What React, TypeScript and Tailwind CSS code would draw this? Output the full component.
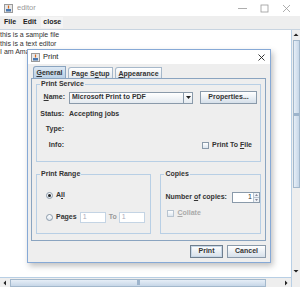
import React from "react";

const font = "font-['Liberation_Sans',Arial,sans-serif]";

function JavaIcon() {
  return (
    <svg width="9" height="9" viewBox="0 0 9 9">
      <rect x="0.5" y="0.5" width="8" height="8" fill="#e8e8e8" stroke="#9a9a9a" />
      <path d="M4.5 1.5 L4.5 4.5" stroke="#d2691e" strokeWidth="1.2" />
      <rect x="2" y="5" width="5" height="2.5" fill="#4a78b0" />
    </svg>
  );
}

function ArrowBox({ dir }: { dir: "up" | "down" | "left" | "right" }) {
  const paths = {
    up: "M1.5 5 L4 2.5 L6.5 5 Z",
    down: "M1.5 3 L4 5.5 L6.5 3 Z",
    left: "M5 1.5 L2.5 4 L5 6.5 Z",
    right: "M3 1.5 L5.5 4 L3 6.5 Z",
  };
  return (
    <div className="flex h-[8px] w-[8px] items-center justify-center bg-[#eeeeee]">
      <svg width="8" height="8" viewBox="0 0 8 8">
        <path d={paths[dir]} fill="#222" />
      </svg>
    </div>
  );
}

function Check({ disabled }: { disabled?: boolean }) {
  return (
    <span
      className={`inline-block h-[7px] w-[7px] border bg-gradient-to-b from-white to-[#dde6ef] ${
        disabled ? "border-[#b8c4d0]" : "border-[#8a9aaa]"
      }`}
    />
  );
}

function Radio({ on }: { on?: boolean }) {
  return (
    <span className="flex h-[7px] w-[7px] items-center justify-center rounded-full border border-[#8a9aaa] bg-gradient-to-b from-white to-[#dde6ef]">
      {on && <span className="h-[3px] w-[3px] rounded-full bg-[#222]" />}
    </span>
  );
}

function Btn({ label, focus, w }: { label: string; focus?: boolean; w: string }) {
  return (
    <div
      className={`flex h-[13px] ${w} items-center justify-center border bg-gradient-to-b from-white to-[#d6e0ea] text-[7px] font-bold text-[#333] ${
        focus ? "border-[#6f7f8f] shadow-[inset_0_0_0_1px_#c8d8e8]" : "border-[#8a9aaa]"
      }`}
    >
      {label}
    </div>
  );
}

function Group({ title, className, children }: { title: string; className: string; children: React.ReactNode }) {
  return (
    <fieldset className={`border border-[#b8cfe5] ${className}`}>
      <legend className="ml-[3px] px-[1px] text-[7px] font-bold leading-[8px] text-[#333]">{title}</legend>
      {children}
    </fieldset>
  );
}

export default function App() {
  return (
    <div className={`relative h-[287px] w-[300px] overflow-hidden bg-white ${font} text-[#333]`}>
      {/* outer window title bar */}
      <div className="flex h-[16px] items-center bg-white pl-[4px]">
        <JavaIcon />
        <span className="ml-[4px] text-[7.5px] text-[#999]">editor</span>
        <div className="ml-auto flex items-center gap-[13px] pr-[9px] text-[#999]">
          <svg width="9" height="9" viewBox="0 0 9 9">
            <path d="M0 4.5 H9" stroke="#999" strokeWidth="0.8" />
          </svg>
          <svg width="9" height="9" viewBox="0 0 9 9">
            <rect x="1" y="1" width="7" height="7" fill="none" stroke="#999" strokeWidth="0.8" />
          </svg>
          <svg width="9" height="9" viewBox="0 0 9 9">
            <path d="M1 1 L8 8 M8 1 L1 8" stroke="#999" strokeWidth="0.8" />
          </svg>
        </div>
      </div>

      {/* menu bar */}
      <div className="flex h-[14px] items-center gap-[7px] border-b border-[#c8d4e0] bg-[#eeeeee] pl-[4px] text-[7px] font-bold text-[#222]">
        <span>File</span>
        <span>Edit</span>
        <span className="-ml-[2px] bg-[#f4f4f4] px-[2px]">close</span>
      </div>

      {/* editor area */}
      <div className="flex h-[257px]">
        <div className="flex flex-1 flex-col">
          <div className="flex-1 bg-white pt-[1px] text-[7px] leading-[8.7px] text-[#333]">
            <div>this is a sample file</div>
            <div>this is a text editor</div>
            <div>I am Ama</div>
          </div>
          {/* horizontal scrollbar */}
          <div className="flex h-[10px] items-center gap-[1px] border-t border-[#b8cfe5] bg-[#eeeeee] px-[1px]">
            <ArrowBox dir="left" />
            <div className="relative flex h-[8px] w-[256px] items-center justify-center border border-[#a3b8cc] bg-gradient-to-b from-[#e6eef7] to-[#c7d7e8]">
              <span className="h-[5px] w-[3px] bg-[#9db4cc]" />
            </div>
            <div className="flex-1" />
            <ArrowBox dir="right" />
          </div>
        </div>
        {/* vertical scrollbar */}
        <div className="flex w-[9px] flex-col items-center gap-[1px] border-l border-[#b8cfe5] bg-[#eeeeee] py-[1px]">
          <ArrowBox dir="up" />
          <div className="flex h-[148px] w-[7px] items-center justify-center border border-[#a3b8cc] bg-gradient-to-r from-[#e6eef7] to-[#c7d7e8]">
            <span className="h-[3px] w-[5px] bg-[#9db4cc]" />
          </div>
          <div className="flex-1" />
          <ArrowBox dir="down" />
          <div className="h-[10px]" />
        </div>
      </div>

      {/* print dialog */}
      <div className="absolute left-[27px] top-[49px] flex h-[214px] w-[244px] flex-col border border-[#86a9d6] bg-[#eeeeee] shadow-[2px_3px_6px_rgba(0,0,0,0.25)]">
        <div className="flex h-[14px] items-center bg-white pl-[3px]">
          <JavaIcon />
          <span className="ml-[3px] text-[7.5px] text-[#222]">Print</span>
          <svg className="ml-auto mr-[5px]" width="7" height="7" viewBox="0 0 7 7">
            <path d="M0.5 0.5 L6.5 6.5 M6.5 0.5 L0.5 6.5" stroke="#222" strokeWidth="0.9" />
          </svg>
        </div>

        <div className="flex flex-1 flex-col px-[3px] pt-[2px]">
          {/* tabs */}
          <div className="flex h-[12px] items-end gap-[2px] pl-[2px] text-[7px] font-bold leading-none">
            <div className="flex h-[12px] w-[33px] items-center justify-center rounded-tl-[3px] border border-b-0 border-[#8aa4c0] bg-gradient-to-b from-[#dde8f3] to-[#b8cfe5]">
              <span className="underline decoration-[0.5px] underline-offset-[1px]">G</span>eneral
            </div>
            <div className="flex h-[11px] w-[45px] items-center justify-center rounded-tl-[3px] border border-b-0 border-[#a6b8ca] bg-gradient-to-b from-white to-[#e2e8ee]">
              Page S<span className="underline decoration-[0.5px] underline-offset-[1px]">e</span>tup
            </div>
            <div className="flex h-[11px] w-[47px] items-center justify-center rounded-tl-[3px] border border-b-0 border-[#a6b8ca] bg-gradient-to-b from-white to-[#e2e8ee]">
              <span className="underline decoration-[0.5px] underline-offset-[1px]">A</span>ppearance
            </div>
          </div>

          {/* tab panel */}
          <div className="flex h-[163px] w-[235px] flex-col border border-[#8aa4c0] px-[4px] pt-[1px]">
            <Group title="Print Service" className="h-[82px] w-[225px]">
              <div className="flex items-center pt-[3px]">
                <span className="w-[28px] text-right text-[7px] font-bold">
                  <span className="underline decoration-[0.5px] underline-offset-[1px]">N</span>ame:
                </span>
                <div className="ml-[4px] flex h-[12px] w-[124px] items-center border border-[#8a9aaa] bg-gradient-to-b from-white to-[#e4eaf0]">
                  <span className="flex-1 pl-[2px] text-[7px] font-bold">Microsoft Print to PDF</span>
                  <div className="flex h-full w-[9px] items-center justify-center border-l border-[#8a9aaa]">
                    <svg width="5" height="3" viewBox="0 0 5 3">
                      <path d="M0 0 H5 L2.5 3 Z" fill="#222" />
                    </svg>
                  </div>
                </div>
                <div className="ml-[7px]">
                  <Btn label="Properties..." w="w-[57px]" />
                </div>
              </div>
              <div className="flex h-[17px] items-center pt-[4px] text-[7px] font-bold">
                <span className="w-[27px] text-right">Status:</span>
                <span className="ml-[5px]">Accepting jobs</span>
              </div>
              <div className="flex h-[16px] items-center text-[7px] font-bold">
                <span className="w-[27px] text-right">Type:</span>
              </div>
              <div className="flex h-[17px] items-center text-[7px] font-bold">
                <span className="w-[27px] text-right">Info:</span>
                <div className="ml-auto mr-[8px] flex items-center gap-[3px]">
                  <Check />
                  <span>
                    Print To <span className="underline decoration-[0.5px] underline-offset-[1px]">F</span>ile
                  </span>
                </div>
              </div>
            </Group>

            <div className="mt-[8px] flex gap-[9px]">
              <Group title="Print Range" className="h-[64px] w-[116px]">
                <div className="flex items-center gap-[3px] pl-[9px] pt-[12px] text-[7px] font-bold">
                  <Radio on />
                  <span>
                    A<span className="underline decoration-[0.5px] underline-offset-[1px]">l</span>l
                  </span>
                </div>
                <div className="flex items-center pl-[9px] pt-[11px] text-[7px] font-bold">
                  <Radio />
                  <span className="ml-[3px]">
                    Pa<span className="underline decoration-[0.5px] underline-offset-[1px]">g</span>es
                  </span>
                  <div className="ml-[3px] flex h-[11px] w-[26px] items-center border border-[#c4d4e4] bg-white pl-[2px] font-normal text-[#aab]">
                    1
                  </div>
                  <span className="ml-[3px] text-[#999]">To</span>
                  <div className="ml-[2px] flex h-[11px] w-[26px] items-center border border-[#c4d4e4] bg-white pl-[2px] font-normal text-[#aab]">
                    1
                  </div>
                </div>
              </Group>
              <Group title="Copies" className="h-[64px] w-[101px]">
                <div className="flex items-center pl-[4px] pt-[14px] text-[7px] font-bold">
                  <span>
                    Number <span className="underline decoration-[0.5px] underline-offset-[1px]">o</span>f copies:
                  </span>
                  <div className="ml-[5px] flex h-[11px] w-[28px] border border-[#8a9aaa] bg-white">
                    <span className="flex flex-1 items-center justify-end pr-[1px] font-normal">1</span>
                    <div className="flex w-[6px] flex-col border-l border-[#b8c4d0]">
                      <div className="flex flex-1 items-center justify-center border-b border-[#b8c4d0] bg-[#eef2f6]">
                        <svg width="3" height="2" viewBox="0 0 3 2"><path d="M0 2 L1.5 0 L3 2 Z" fill="#889" /></svg>
                      </div>
                      <div className="flex flex-1 items-center justify-center bg-[#eef2f6]">
                        <svg width="3" height="2" viewBox="0 0 3 2"><path d="M0 0 L1.5 2 L3 0 Z" fill="#889" /></svg>
                      </div>
                    </div>
                  </div>
                </div>
                <div className="flex items-center gap-[3px] pl-[6px] pt-[5px] text-[7px] font-bold text-[#aaa]">
                  <Check disabled />
                  <span>
                    <span className="underline decoration-[0.5px] underline-offset-[1px]">C</span>ollate
                  </span>
                </div>
              </Group>
            </div>
          </div>

          {/* dialog buttons */}
          <div className="mt-[4px] flex justify-end gap-[4px] pr-[1px]">
            <Btn label="Print" focus w="w-[33px]" />
            <Btn label="Cancel" w="w-[39px]" />
          </div>
        </div>
      </div>
    </div>
  );
}
